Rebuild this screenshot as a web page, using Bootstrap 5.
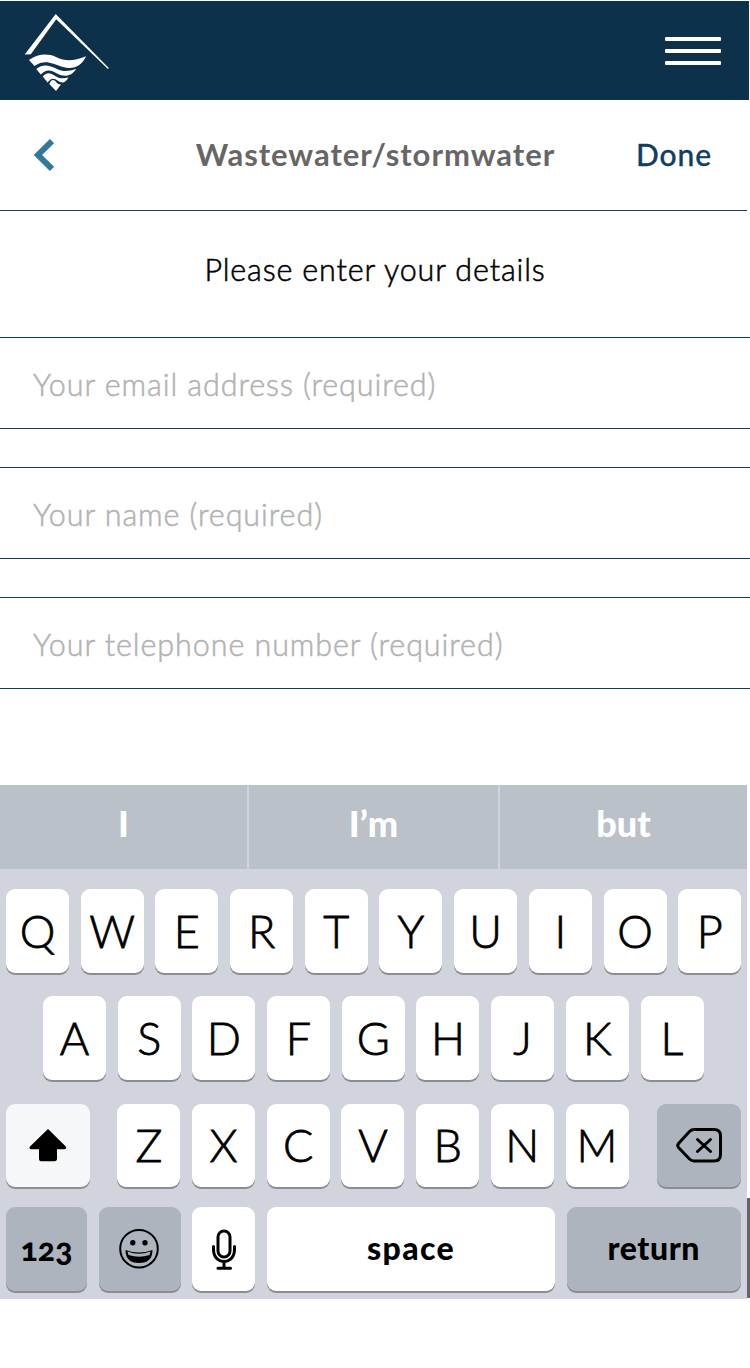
<!DOCTYPE html>
<html lang="en">
<head>
<meta charset="utf-8">
<meta name="viewport" content="width=device-width, initial-scale=1">
<title>Wastewater/stormwater</title>
<link href="https://cdn.jsdelivr.net/npm/bootstrap@5.3.0/dist/css/bootstrap.min.css" rel="stylesheet">
<style>
  body { font-family: Lato, "Open Sans", sans-serif; font-size: 30px; line-height: 36px; color: #000; height: 1368px; overflow: hidden; }
  .topbar { height: 99px; width: 749px; margin-top: 1px; background: #0d314a; padding: 0 28px 0 20px; }
  .burger { width: 56px; height: 28px; }
  .burger i { display: block; height: 4px; border-radius: 1px; background: #fff; }
  .titlebar { height: 111px; width: 747px; border-bottom: 1px solid #113f5b; }
  .page-title { color: #666; font-size: 31px; font-weight: 700; letter-spacing: .95px; margin-right: -4px; }
  .done { color: #113d5f; font-weight: 500; letter-spacing: .9px; -webkit-text-stroke: .3px; margin-right: 11px; }
  .page-title, .done { display: inline-block; padding-bottom: 2px; }
  .intro { height: 126px; padding-top: 40px; font-size: 30.5px; font-weight: 300; letter-spacing: .85px; -webkit-text-stroke: .55px; }
  .entry { height: 92px; margin-bottom: 38px; border: solid #113d5f; border-width: 1px 0; border-radius: 0; padding: 2px 33px 0; font-size: 30.5px; font-weight: 300; letter-spacing: .92px; }
  .entry::placeholder { color: #b3b3b3; opacity: 1; -webkit-text-stroke: .55px; }
  .keyboard { width: 747px; height: 514px; margin-top: 96px; background: #d1d4dc; }
  .hints { height: 84px; gap: 2px; color: #fff; font-size: 36px; font-weight: 900; }
  .hints > div { background: #bac1c9; padding-bottom: 9px; }
  .keyrow { height: 85.5px; gap: 11.7px; }
  .key { height: 83.5px; width: 63px; border: 0; border-radius: 9px; background: #fff; box-shadow: 0 2px 0 #8b8d91; font-size: 45px; font-weight: 300; -webkit-text-stroke: .8px; flex: none; padding: 0; color: #000; }
  .key-dark { background: #adb4be; }
  .word { font-size: 32px; font-weight: 900; -webkit-text-stroke: 0; padding-bottom: 2px; }
  .scroll-mark { width: 3px; height: 100px; left: 747px; top: 1198px; background: #666; }
  svg { display: block; }
</style>
</head>
<body class="bg-white">
<header class="topbar d-flex align-items-center justify-content-between">
  <svg width="92" height="99" viewBox="20 1 92 99" fill="#fff">
    <path d="M24.700 54.500 55.700 14 108.800 68 108 69 56.200 19.300 30.800 54.200Z"/>
    <path d="M29 60C38 54 47 53 56 57C66 62 74 61 86 56.200C82 66 73 70 63 67C51 63 45 59 34.500 66Z"/>
    <path d="M36.200 69C43 63.500 49 65 57 69C64 72.300 69 71 76.200 69C71 77 64 77 57 73.500C50 69.500 46 69.500 40.800 74.500Z"/>
    <path d="M42.800 76.500C47 71.500 51 73 56 76.500C60 79 64 78.500 68.500 77.500C65 84 61.500 83 58 80.800C53.500 77.500 51 78 47.500 82.500Z"/>
    <path d="M49.300 84C51 79 54 79 56.300 82.300C57.500 84 59 84.500 61 84.500L56 91Z"/>
  </svg>
  <button class="burger btn p-0 border-0 d-flex flex-column justify-content-between" aria-label="Menu"><i class="w-100"></i><i class="w-100"></i><i class="w-100"></i></button>
</header>
<nav class="titlebar row g-0 align-items-center">
  <div class="col-3"><svg class="ms-4" width="30" height="34" viewBox="24 138 30 34"><path d="M52 141 38 155 52 169" fill="none" stroke="#31789a" stroke-width="6"/></svg></div>
  <div class="col-6 text-center"><span class="page-title">Wastewater/stormwater</span></div>
  <div class="col-3 text-end pe-4"><span class="done">Done</span></div>
</nav>
<main>
  <p class="intro text-center mb-0"><span>Please enter your details</span></p>
  <form>
    <input class="entry form-control shadow-none" placeholder="Your email address (required)">
    <input class="entry form-control shadow-none" placeholder="Your name (required)">
    <input class="entry form-control shadow-none" placeholder="Your telephone number (required)">
  </form>
</main>
<section class="keyboard">
  <div class="hints d-flex">
    <div class="d-flex align-items-center justify-content-center" style="width:247px"><span>I</span></div>
    <div class="d-flex align-items-center justify-content-center" style="width:249px"><span>I’m</span></div>
    <div class="d-flex align-items-center justify-content-center" style="width:247px"><span>but</span></div>
  </div>
  <div class="keyrow d-flex" style="margin:20px 0 21.5px 6px"><button class="key">Q</button><button class="key">W</button><button class="key">E</button><button class="key">R</button><button class="key">T</button><button class="key">Y</button><button class="key">U</button><button class="key">I</button><button class="key">O</button><button class="key">P</button></div>
  <div class="keyrow d-flex" style="margin:0 0 22px 43px"><button class="key">A</button><button class="key">S</button><button class="key">D</button><button class="key">F</button><button class="key">G</button><button class="key">H</button><button class="key">J</button><button class="key">K</button><button class="key">L</button></div>
  <div class="keyrow d-flex" style="margin:0 0 18px 6px">
    <button class="key d-flex align-items-center justify-content-center" style="width:84px;margin-right:15.7px;background:#f5f7f9" aria-label="Shift"><svg width="40" height="36" viewBox="28 1127.500 40 36"><path d="M48 1129.500 65.800 1147Q67 1149.500 64 1149.700H57V1159Q57 1161.800 54.500 1161.800H41Q39 1161.800 39 1159V1149.700H31Q28.500 1149 30 1147Z"/></svg></button>
    <button class="key">Z</button><button class="key">X</button><button class="key">C</button><button class="key">V</button><button class="key">B</button><button class="key">N</button><button class="key">M</button>
    <button class="key key-dark d-flex align-items-center justify-content-center" style="width:84px;margin-left:16.4px" aria-label="Delete"><svg width="50" height="40" viewBox="674 1125 50 40" fill="none" stroke="#000" stroke-width="3" stroke-linecap="round" stroke-linejoin="round"><path d="M694 1129.500H714Q720.500 1129.500 720.500 1136V1154.500Q720.500 1161 714 1161H694Q691.500 1161 689.500 1159L678.500 1147.500Q677 1145.500 678.500 1143.500L689.500 1131.500Q691.500 1129.500 694 1129.500ZM697.500 1139.500 710.500 1151.500M710.500 1139.500 697.500 1151.500"/></svg></button>
  </div>
  <div class="keyrow d-flex" style="margin-left:6px">
    <button class="key key-dark word" style="width:81px;font-feature-settings:'onum';padding:0"><span>123</span></button>
    <button class="key key-dark d-flex align-items-center justify-content-center" style="width:82px" aria-label="Emoji"><svg width="42" height="42" viewBox="119 1228 42 42"><circle cx="139" cy="1248.700" r="18.800" fill="none" stroke="#000" stroke-width="2"/><circle cx="132.800" cy="1242.700" r="2.700"/><circle cx="145" cy="1242.700" r="2.700"/><path d="M125.500 1250Q139 1255 152.500 1250Q152.500 1263 139 1263Q125.500 1263 125.500 1250Z"/><path d="M127.500 1251.500Q139 1256 150.500 1251.500L149.500 1255Q139 1258.500 128.500 1255Z" fill="#adb4be"/></svg></button>
    <button class="key d-flex align-items-center justify-content-center" aria-label="Dictate"><svg width="30" height="44" viewBox="209 1227.500 30 44" fill="none" stroke="#000" stroke-width="3" stroke-linecap="round"><rect x="218" y="1231.500" width="12" height="26" rx="6"/><path d="M213.500 1247V1250C213.500 1266 234.500 1266 234.500 1250V1247M224 1262V1268M218 1268.700H230.500"/></svg></button>
    <button class="key word" style="width:288px;letter-spacing:1.4px"><span>space</span></button>
    <button class="key key-dark word" style="width:174px;letter-spacing:.6px"><span>return</span></button>
  </div>
</section>
<div class="scroll-mark position-absolute"></div>
<script src="https://cdn.jsdelivr.net/npm/bootstrap@5.3.0/dist/js/bootstrap.bundle.min.js"></script>
</body>
</html>
